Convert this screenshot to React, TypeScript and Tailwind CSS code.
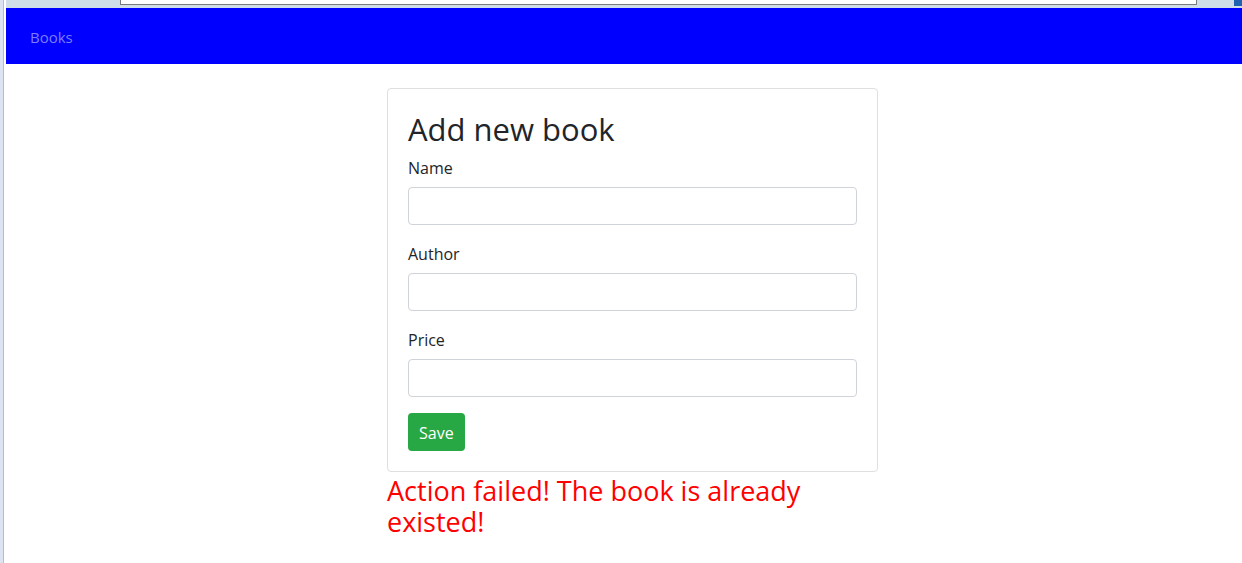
export default function App() {
  const fields = ['Name', 'Author', 'Price']

  return (
    <div className="flex h-[563px] w-[1242px] overflow-hidden bg-white font-['Open_Sans',sans-serif]">
      {/* left window edge */}
      <div className="flex h-full w-[6px] shrink-0">
        <div className="w-[3px] bg-[#dde3f3]" />
        <div className="w-px bg-[#b9bccb]" />
        <div className="w-[2px] bg-white" />
      </div>

      <div className="flex min-w-0 flex-1 flex-col">
        {/* browser chrome remnant */}
        <div className="flex h-[8px] shrink-0 bg-[#cfdde9]">
          <div className="ml-[114px] h-[5px] w-[1077px] border-x border-b border-[#7a7a7a] bg-white" />
          <div className="ml-auto h-[6px] w-[8px] bg-[#1f63b0]" />
        </div>

        {/* navbar */}
        <nav className="flex h-[56px] shrink-0 items-center bg-[#0000ff] px-6 pt-[3px]">
          <a className="text-[15px] text-[#7d7dff]">Books</a>
        </nav>

        <main className="pl-[381px] pt-6">
          <div className="w-[491px] rounded border border-[#dfdfdf] px-5 pb-5 pt-[22px]">
            <h2 className="mb-2 text-[31px] leading-[36px] text-[#212529]">Add new book</h2>
            {fields.map((f) => (
              <div key={f} className="mb-4">
                <label className="mb-2 block pt-px text-base leading-6 text-[#212529]">{f}</label>
                <input className="-mt-px block h-[38px] w-full rounded border border-[#ced4da] bg-white px-3" />
              </div>
            ))}
            <button className="h-[38px] rounded bg-[#28a745] px-[11px] pt-px text-base text-white">Save</button>
          </div>
          <p className="mt-[3px] w-[491px] text-[27px] leading-[31px] text-[#ff0000]">
            Action failed! The book is already existed!
          </p>
        </main>
      </div>
    </div>
  )
}
